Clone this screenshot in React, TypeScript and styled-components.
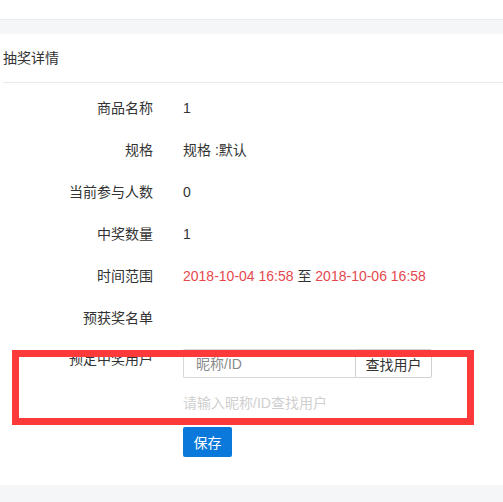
import React from "react";
import styled, { createGlobalStyle } from "styled-components";

const Global = createGlobalStyle`
  html, body { margin: 0; padding: 0; background: #fff; }
  body { font-family: "Liberation Sans", "Noto Sans CJK SC", sans-serif; font-size: 14px; color: #333; }
`;

const Page = styled.div`
  position: relative;
  width: 503px;
  height: 502px;
  overflow: hidden;
  display: flex;
  flex-direction: column;
`;

const TopBar = styled.div`
  height: 19px;
  border-bottom: 1px solid #e9eaec;
  background: #fff;
`;

const Band = styled.div<{ $h: number }>`
  height: ${(p) => p.$h}px;
  background: #f5f6f8;
  flex-shrink: 0;
`;

const Card = styled.div`
  flex: 1;
  background: #fff;
  padding-left: 3px;
  display: flex;
  flex-direction: column;
`;

const CardHeader = styled.div`
  height: 48px;
  line-height: 48px;
  border-bottom: 1px solid #e9eaec;
  font-size: 14px;
  color: #333;
`;

const Form = styled.div`
  padding-top: 15px;
  display: flex;
  flex-direction: column;
`;

const Row = styled.div<{ $mb?: number }>`
  display: flex;
  align-items: flex-start;
  margin-bottom: ${(p) => (p.$mb ?? 22)}px;
`;

const Label = styled.div`
  width: 150px;
  text-align: right;
  line-height: 20px;
  color: #333;
  flex-shrink: 0;
`;

const Value = styled.div`
  margin-left: 30px;
  line-height: 20px;
  color: #333;
`;

const Red = styled.span`
  color: #e5484d;
`;

const Control = styled.div`
  margin-left: 30px;
  display: flex;
  flex-direction: column;
  align-items: flex-start;
`;

const InputGroup = styled.div`
  display: flex;
  width: 249px;
  height: 29px;
`;

const Input = styled.input`
  box-sizing: border-box;
  width: 172px;
  height: 29px;
  border: 1px solid #d7d8da;
  border-right: none;
  border-top-left-radius: 2px;
  border-bottom-left-radius: 2px;
  padding: 0 12px;
  font-family: inherit;
  font-size: 14px;
  color: #333;
  outline: none;
  &::placeholder { color: #8a8a8a; }
`;

const AddonButton = styled.button`
  box-sizing: border-box;
  width: 77px;
  height: 29px;
  border: 1px solid #d0d1d3;
  background: #fff;
  border-top-right-radius: 2px;
  border-bottom-right-radius: 2px;
  font-family: inherit;
  font-size: 14px;
  color: #333;
  padding: 0;
`;

const Hint = styled.div`
  margin-top: 15px;
  line-height: 20px;
  color: #cfcfcf;
`;

const SaveButton = styled.button`
  margin-top: 14px;
  width: 49px;
  height: 30px;
  border: none;
  border-radius: 2px;
  background: #0b79db;
  color: #fff;
  font-family: inherit;
  font-size: 14px;
  padding: 0;
`;

const Highlight = styled.div`
  position: absolute;
  left: 12px;
  top: 350px;
  width: 462px;
  height: 75px;
  box-sizing: border-box;
  border: 7px solid #fd3a3a;
  pointer-events: none;
`;

const rows: { label: string; value: React.ReactNode }[] = [
  { label: "商品名称", value: "1" },
  { label: "规格", value: "规格 :默认" },
  { label: "当前参与人数", value: "0" },
  { label: "中奖数量", value: "1" },
  {
    label: "时间范围",
    value: (
      <>
        <Red>2018-10-04 16:58</Red> 至 <Red>2018-10-06 16:58</Red>
      </>
    ),
  },
  { label: "预获奖名单", value: "" },
];

export default function App() {
  return (
    <>
      <Global />
      <Page>
        <TopBar />
        <Band $h={14} />
        <Card>
          <CardHeader>抽奖详情</CardHeader>
          <Form>
            {rows.map((r, i) => (
              <Row key={r.label} $mb={i === rows.length - 1 ? 21 : 22}>
                <Label>{r.label}</Label>
                <Value>{r.value}</Value>
              </Row>
            ))}
            <Row $mb={0}>
              <Label>预定中奖用户</Label>
              <Control>
                <InputGroup>
                  <Input placeholder="昵称/ID" />
                  <AddonButton>查找用户</AddonButton>
                </InputGroup>
                <Hint>请输入昵称/ID查找用户</Hint>
                <SaveButton>保存</SaveButton>
              </Control>
            </Row>
          </Form>
        </Card>
        <Band $h={17} />
        <Highlight />
      </Page>
    </>
  );
}
